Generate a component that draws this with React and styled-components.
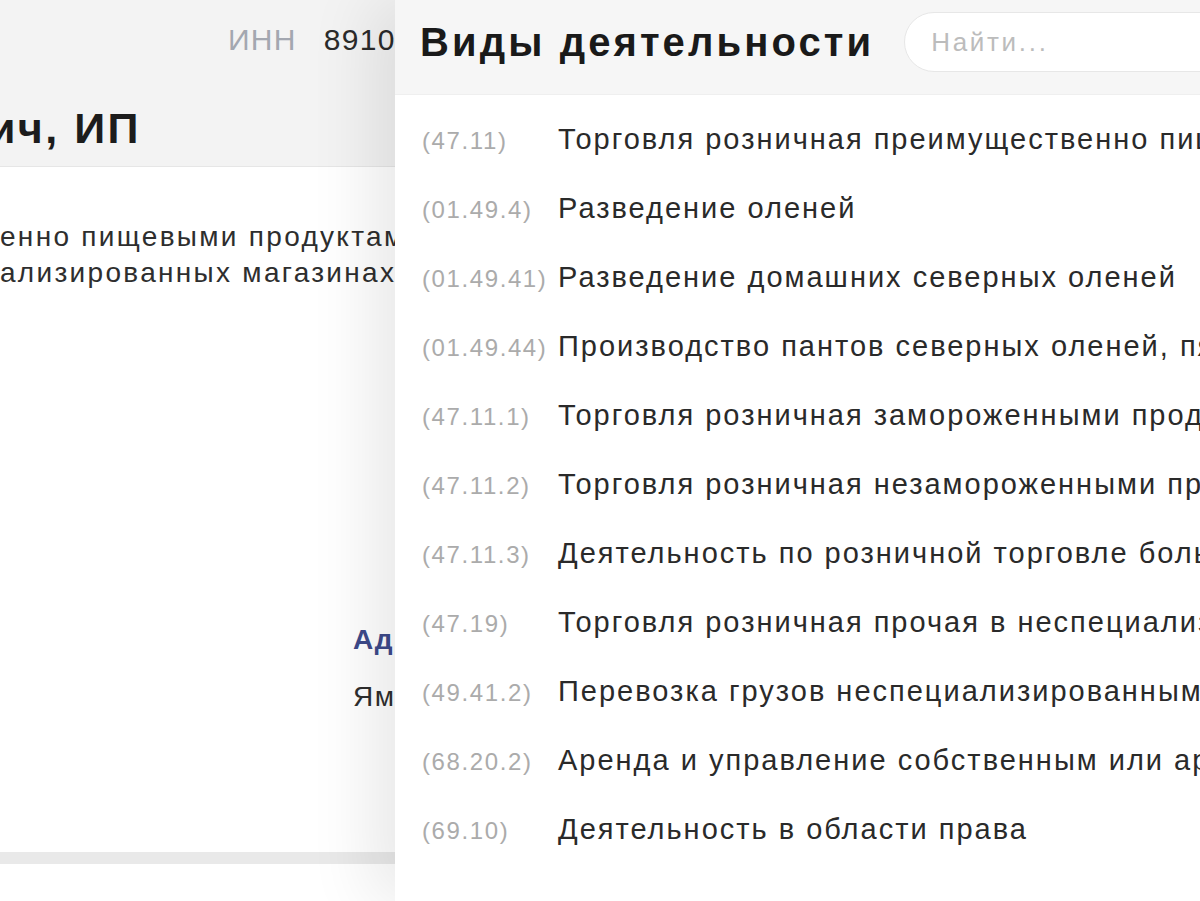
import React from "react";
import styled, { createGlobalStyle } from "styled-components";

const GlobalStyle = createGlobalStyle`
  html, body { margin: 0; padding: 0; background: #ffffff; }
  body { font-family: "Liberation Sans", Arial, sans-serif; overflow: hidden; }
  * { box-sizing: border-box; }
`;

const Screen = styled.div`
  position: relative;
  width: 1200px;
  height: 901px;
  overflow: hidden;
  background: #ffffff;
`;

const BackPage = styled.div`
  display: flex;
  flex-direction: column;
  width: 100%;
  height: 100%;
`;

const TopBar = styled.header`
  display: flex;
  flex-direction: column;
  height: 167px;
  background: #f3f3f3;
  border-bottom: 1px solid #e6e6e6;
`;

const InnRow = styled.div`
  display: flex;
  gap: 27px;
  padding: 22px 0 0 228px;
  font-size: 30px;
  line-height: 36px;
  letter-spacing: 1.3px;
  white-space: nowrap;
`;

const InnLabel = styled.span`
  color: #a3a7b0;
`;

const InnValue = styled.span`
  color: #2b2b2b;
`;

const TitleClip = styled.div`
  display: flex;
  justify-content: flex-end;
  width: 141px;
  overflow: hidden;
  margin-top: 47px;
`;

const PageTitle = styled.h1`
  margin: 0;
  white-space: nowrap;
  font-size: 43px;
  line-height: 46px;
  font-weight: 700;
  letter-spacing: 2.5px;
  color: #1c1c1c;
`;

const Card = styled.section`
  display: grid;
  grid-template-columns: 353px 1fr;
  align-content: start;
  height: 697px;
  background: #ffffff;
  border-bottom: 12px solid #e9e9e9;
`;

const Description = styled.div`
  grid-column: 1 / 3;
  padding-top: 52px;
  font-size: 28px;
  line-height: 36px;
  letter-spacing: 2.3px;
  color: #2e2e2e;
  white-space: nowrap;
`;

const InfoColumn = styled.div`
  grid-column: 2 / 3;
  padding-top: 331px;
  display: flex;
  flex-direction: column;
  gap: 21px;
  white-space: nowrap;
`;

const InfoLabel = styled.div`
  font-size: 28px;
  line-height: 36px;
  font-weight: 700;
  letter-spacing: 1.5px;
  color: #3d4a8a;
`;

const InfoValue = styled.div`
  font-size: 28px;
  line-height: 36px;
  letter-spacing: 1.5px;
  color: #2e2e2e;
`;

const Drawer = styled.aside`
  position: absolute;
  top: 0;
  left: 395px;
  width: 805px;
  height: 901px;
  display: flex;
  flex-direction: column;
  background: #ffffff;
  box-shadow: -24px 0 60px rgba(0, 0, 0, 0.09);
`;

const DrawerHeader = styled.div`
  display: flex;
  align-items: center;
  gap: 30px;
  padding: 12px 0 22px 25px;
  background: #f6f6f6;
  border-bottom: 1px solid #efefef;
  white-space: nowrap;
`;

const DrawerTitle = styled.h2`
  margin: 0;
  font-size: 40px;
  line-height: 60px;
  font-weight: 700;
  color: #1a1a1a;
  letter-spacing: 3.1px;
`;

const SearchField = styled.input`
  flex: 0 0 420px;
  height: 60px;
  padding: 0 26px;
  border: 1px solid #e7e7e7;
  border-radius: 30px;
  background: #ffffff;
  font-family: inherit;
  font-size: 26px;
  letter-spacing: 2.7px;
  color: #333;
  outline: none;
  &::placeholder { color: #bcbcbc; }
`;

const List = styled.ul`
  list-style: none;
  margin: 0;
  padding: 12px 0 0 27px;
  display: flex;
  flex-direction: column;
`;

const Row = styled.li`
  display: flex;
  align-items: baseline;
  height: 69px;
  padding-top: 16px;
  white-space: nowrap;
`;

const Code = styled.span`
  flex: 0 0 auto;
  min-width: 136px;
  padding-right: 4px;
  font-size: 24px;
  letter-spacing: 1.6px;
  color: #ababab;
`;

const Name = styled.span`
  font-size: 29px;
  letter-spacing: 2px;
  color: #2a2a2a;
`;

const activities = [
  ["47.11", "Торговля розничная преимущественно пищевыми продуктами, включая напитки"],
  ["01.49.4", "Разведение оленей"],
  ["01.49.41", "Разведение домашних северных оленей"],
  ["01.49.44", "Производство пантов северных оленей, пятнистых оленей"],
  ["47.11.1", "Торговля розничная замороженными продуктами"],
  ["47.11.2", "Торговля розничная незамороженными продуктами"],
  ["47.11.3", "Деятельность по розничной торговле большим товарным ассортиментом"],
  ["47.19", "Торговля розничная прочая в неспециализированных магазинах"],
  ["49.41.2", "Перевозка грузов неспециализированными автотранспортными средствами"],
  ["68.20.2", "Аренда и управление собственным или арендованным нежилым недвижимым имуществом"],
  ["69.10", "Деятельность в области права"],
];

export default function App() {
  return (
    <Screen>
      <GlobalStyle />
      <BackPage>
        <TopBar>
          <InnRow>
            <InnLabel>ИНН</InnLabel>
            <InnValue>891000000000</InnValue>
          </InnRow>
          <TitleClip>
            <PageTitle>Иванов Иван Иванович, ИП</PageTitle>
          </TitleClip>
        </TopBar>
        <Card>
          <Description>
            <div>енно пищевыми продуктами, включая напитки, и табачными изделиями в</div>
            <div>ализированных магазинах</div>
          </Description>
          <InfoColumn>
            <InfoLabel>Адрес</InfoLabel>
            <InfoValue>Ямало-Ненецкий автономный округ</InfoValue>
          </InfoColumn>
        </Card>
      </BackPage>
      <Drawer>
        <DrawerHeader>
          <DrawerTitle>Виды деятельности</DrawerTitle>
          <SearchField placeholder="Найти..." />
        </DrawerHeader>
        <List>
          {activities.map(([code, name]) => (
            <Row key={code}>
              <Code>({code})</Code>
              <Name>{name}</Name>
            </Row>
          ))}
        </List>
      </Drawer>
    </Screen>
  );
}
